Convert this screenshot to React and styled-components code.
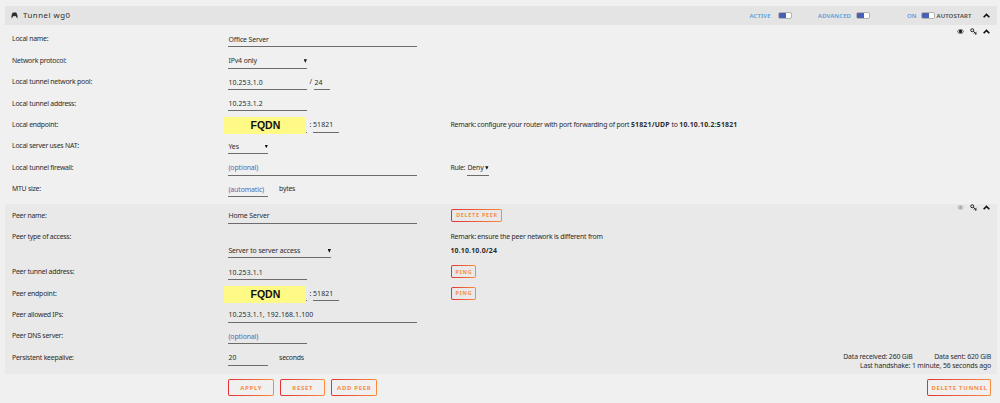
import styled, { createGlobalStyle } from 'styled-components'

const GlobalStyle = createGlobalStyle`
  * {
    box-sizing: border-box;
  }

  body {
    margin: 0;
    background: #f0f0f0;
    color: #2c2c2c;
    font-family: 'Noto Sans', 'Open Sans', sans-serif;
    font-size: 6.9px;
    overflow: hidden;
  }

  b {
    letter-spacing: 0.2px;
  }
`

const Page = styled.div`
  width: 1000px;
  height: 403px;
  padding: 6px 3px 0 5px;
  background: #f0f0f0;
`

const TitleBar = styled.header`
  display: flex;
  align-items: center;
  height: 19px;
  padding: 0 7px 0 6px;
  background: #e4e4e4;
`

const Title = styled.h1`
  margin: 0 auto 0 5px;
  font-size: 7.8px;
  font-weight: 400;
  letter-spacing: 0.53px;
  line-height: 19px;
`

const SwitchLabel = styled.span`
  flex: none;
  width: ${({ width }) => width}px;
  color: ${({ $muted }) => ($muted ? '#4a4a4a' : '#5a9bd5')};
  font-size: 6px;
  font-weight: 600;
  letter-spacing: 0.1px;
  white-space: nowrap;
`

const Switch = styled.span`
  flex: none;
  width: 14px;
  height: 7.5px;
  margin-right: ${({ $gap }) => $gap}px;
  border: 1px solid #b4b4b4;
  border-radius: 2px;
  background: linear-gradient(90deg, #4a60b4 58%, #fff 58%) border-box;
`

const Section = styled.section`
  position: relative;
  height: ${({ height }) => height}px;
  padding: ${({ $top }) => $top}px 7px 0;
  background: ${({ $shaded }) => ($shaded ? '#e9e9e9' : 'transparent')};
`

const SectionIcons = styled.div`
  position: absolute;
  top: ${({ $top }) => $top}px;
  right: 7px;
  display: flex;
  align-items: center;
  gap: 6px;
`

const Row = styled.div`
  display: grid;
  grid-template-columns: 216.4px 222px 1fr;
  height: ${({ $tall }) => ($tall ? 35 : 21.4)}px;
  line-height: 21.4px;
  white-space: nowrap;
`

const Label = styled.div`
  letter-spacing: -0.23px;
`

const Cell = styled.div`
  display: flex;
  align-items: flex-start;
  padding-top: ${({ $top }) => $top || 0}px;
`

const Field = styled.div`
  display: flex;
  justify-content: space-between;
  flex: none;
  width: ${({ width }) => width}px;
  height: 18.8px;
  padding-top: 0.4px;
  border-bottom: 1px solid #6c6c6c;
  color: ${({ $empty }) => ($empty ? '#5468b4' : 'inherit')};
  letter-spacing: ${({ $numeric }) => ($numeric ? 0.13 : -0.1)}px;
`

const Arrow = styled.span`
  width: 3.4px;
  height: 3.6px;
  margin: 9px 0.4px 0 0;
  background: #111;
  clip-path: polygon(0 0, 100% 0, 50% 100%);
`

const Separator = styled.span`
  width: ${({ width }) => width}px;
  padding-left: 2px;
`

const Rule = styled.span`
  width: 17px;
  letter-spacing: -0.25px;
`

const Unit = styled.span`
  margin-left: 10.7px;
  letter-spacing: -0.25px;
`

const HostField = styled(Field)`
  position: relative;
`

const Mask = styled.div`
  position: absolute;
  top: 3px;
  left: -4px;
  width: 82px;
  height: 17px;
  background: #fffa86;
  color: #111;
  font: bold 10.5px/17.5px 'Liberation Sans', Arial, sans-serif;
  letter-spacing: 0;
  text-align: center;
`

const Remark = styled.div`
  margin-top: ${({ $top }) => $top || 0}px;
  line-height: ${({ $leading }) => $leading || 21.4}px;
  letter-spacing: -0.21px;
`

const Button = styled.button`
  width: ${({ width }) => width}px;
  height: 17px;
  padding: 0 0 0 1px;
  border: 1px solid transparent;
  border-radius: 2px;
  background:
    linear-gradient(#f0f0f0, #f0f0f0) padding-box no-repeat,
    linear-gradient(90deg, #e03237, #fb8c3c) border-box no-repeat;
  color: #fa8c46;
  font-family: inherit;
  font-size: 6px;
  font-weight: 700;
  letter-spacing: 0.68px;
  line-height: 10px;
  white-space: nowrap;
`

const SmallButton = styled(Button)`
  height: 13px;
  margin: 4px 0 0 0.6px;
  background:
    linear-gradient(#e9e9e9, #e9e9e9) padding-box no-repeat,
    linear-gradient(90deg, #e03237, #fb8c3c) border-box no-repeat;
  font-size: 5.4px;
  letter-spacing: 0.75px;
`

const Stats = styled.div`
  position: absolute;
  right: 6px;
  bottom: 4px;
  line-height: 9px;
  letter-spacing: -0.15px;
  text-align: right;
`

const Sent = styled.span`
  margin-left: 21.5px;
`

const Actions = styled.footer`
  display: flex;
  gap: 6px;
  padding: 5px 6px 0 223px;

  button:last-child {
    margin-left: auto;
  }
`

const LogoIcon = () => (
  <svg width="7" height="7" viewBox="0 0 14 14">
    <path d="M3.500 1h7l2 4.500 1 5-2.300 1L9.500 7.500 8 9 7 7.500l-1 1.500-1.500-1.500-1.700 4-2.300-1 1-5z" fill="#2a2a2a" />
    <path d="M.500 13.200l2.200-2.500M13.500 13.200l-2.200-2.500" stroke="#888" strokeWidth="1.600" />
  </svg>
)

const EyeIcon = ({ color = '#1c1c1c' }) => (
  <svg width="7" height="7" viewBox="0 0 14 14">
    <path d="M.500 7c3-5 10-5 13 0-3 5-10 5-13 0z" fill="none" stroke={color} strokeWidth="1.400" />
    <circle cx="7" cy="6.800" r="3.200" fill={color} />
  </svg>
)

const KeyIcon = () => (
  <svg width="7" height="7" viewBox="0 0 14 14" fill="none" stroke="#1c1c1c">
    <circle cx="4.500" cy="4.500" r="3" strokeWidth="2" />
    <path d="M6.700 6.700l6.300 5.300M9.500 9.200l-1.600 2M12 11l-1.300 2.200M11 9.500l2-1" strokeWidth="2" />
  </svg>
)

const ChevronIcon = () => (
  <svg width="7" height="7" viewBox="0 0 14 14">
    <path d="M1.300 10.500L7 5l5.700 5.500" fill="none" stroke="#111" strokeWidth="3.300" />
  </svg>
)

const Host = () => (
  <>
    <HostField width={79}>
      <Mask>FQDN</Mask>
    </HostField>
    <Separator width={5.6}>:</Separator>
    <Field width={26} $numeric>51821</Field>
  </>
)

const App = () => (
  <>
    <GlobalStyle />
    <Page>
      <TitleBar>
        <LogoIcon />
        <Title>Tunnel wg0</Title>
        <SwitchLabel width={28}>ACTIVE</SwitchLabel>
        <Switch $gap={26.5} />
        <SwitchLabel width={38}>ADVANCED</SwitchLabel>
        <Switch $gap={37} />
        <SwitchLabel width={14}>ON</SwitchLabel>
        <Switch $gap={1.5} />
        <SwitchLabel width={46.5} $muted>AUTOSTART</SwitchLabel>
        <ChevronIcon />
      </TitleBar>

      <Section height={179} $top={3.4}>
        <SectionIcons $top={3}>
          <EyeIcon />
          <KeyIcon />
          <ChevronIcon />
        </SectionIcons>
        <Row>
          <Label>Local name:</Label>
          <Cell><Field width={189}>Office Server</Field></Cell>
        </Row>
        <Row>
          <Label>Network protocol:</Label>
          <Cell><Field width={79}>IPv4 only<Arrow /></Field></Cell>
        </Row>
        <Row>
          <Label>Local tunnel network pool:</Label>
          <Cell>
            <Field width={79} $numeric>10.253.1.0</Field>
            <Separator width={7}>/</Separator>
            <Field width={16} $numeric>24</Field>
          </Cell>
        </Row>
        <Row>
          <Label>Local tunnel address:</Label>
          <Cell><Field width={79} $numeric>10.253.1.2</Field></Cell>
        </Row>
        <Row>
          <Label>Local endpoint:</Label>
          <Cell><Host /></Cell>
          <Remark>
            Remark: configure your router with port forwarding of port <b>51821/UDP</b> to <b>10.10.10.2:51821</b>
          </Remark>
        </Row>
        <Row>
          <Label>Local server uses NAT:</Label>
          <Cell><Field width={40}>Yes<Arrow /></Field></Cell>
        </Row>
        <Row>
          <Label>Local tunnel firewall:</Label>
          <Cell><Field width={189} $empty>(optional)</Field></Cell>
          <Cell>
            <Rule>Rule:</Rule>
            <Field width={21.5}>Deny<Arrow /></Field>
          </Cell>
        </Row>
        <Row>
          <Label>MTU size:</Label>
          <Cell>
            <Field width={40} $empty>(automatic)</Field>
            <Unit>bytes</Unit>
          </Cell>
        </Row>
      </Section>

      <Section height={170} $top={0.8} $shaded>
        <SectionIcons $top={0}>
          <EyeIcon color="#aaa" />
          <KeyIcon />
          <ChevronIcon />
        </SectionIcons>
        <Row>
          <Label>Peer name:</Label>
          <Cell><Field width={189}>Home Server</Field></Cell>
          <Cell><SmallButton width={51}>DELETE PEER</SmallButton></Cell>
        </Row>
        <Row $tall>
          <Label>Peer type of access:</Label>
          <Cell $top={13.5}><Field width={103}>Server to server access<Arrow /></Field></Cell>
          <Remark $leading={14} $top={3.7}>
            Remark: ensure the peer network is different from<br />
            <b>10.10.10.0/24</b>
          </Remark>
        </Row>
        <Row>
          <Label>Peer tunnel address:</Label>
          <Cell><Field width={79} $numeric>10.253.1.1</Field></Cell>
          <Cell><SmallButton width={25}>PING</SmallButton></Cell>
        </Row>
        <Row>
          <Label>Peer endpoint:</Label>
          <Cell><Host /></Cell>
          <Cell><SmallButton width={25}>PING</SmallButton></Cell>
        </Row>
        <Row>
          <Label>Peer allowed IPs:</Label>
          <Cell><Field width={189} $numeric>10.253.1.1, 192.168.1.100</Field></Cell>
        </Row>
        <Row>
          <Label>Peer DNS server:</Label>
          <Cell><Field width={79} $empty>(optional)</Field></Cell>
        </Row>
        <Row>
          <Label>Persistent keepalive:</Label>
          <Cell>
            <Field width={40} $numeric>20</Field>
            <Unit>seconds</Unit>
          </Cell>
        </Row>
        <Stats>
          Data received: 260 GiB<Sent>Data sent: 620 GiB</Sent>
          <br />
          Last handshake: 1 minute, 56 seconds ago
        </Stats>
      </Section>

      <Actions>
        <Button width={45.5}>APPLY</Button>
        <Button width={45.5}>RESET</Button>
        <Button width={45.5}>ADD PEER</Button>
        <Button width={64}>DELETE TUNNEL</Button>
      </Actions>
    </Page>
  </>
)

export default App
